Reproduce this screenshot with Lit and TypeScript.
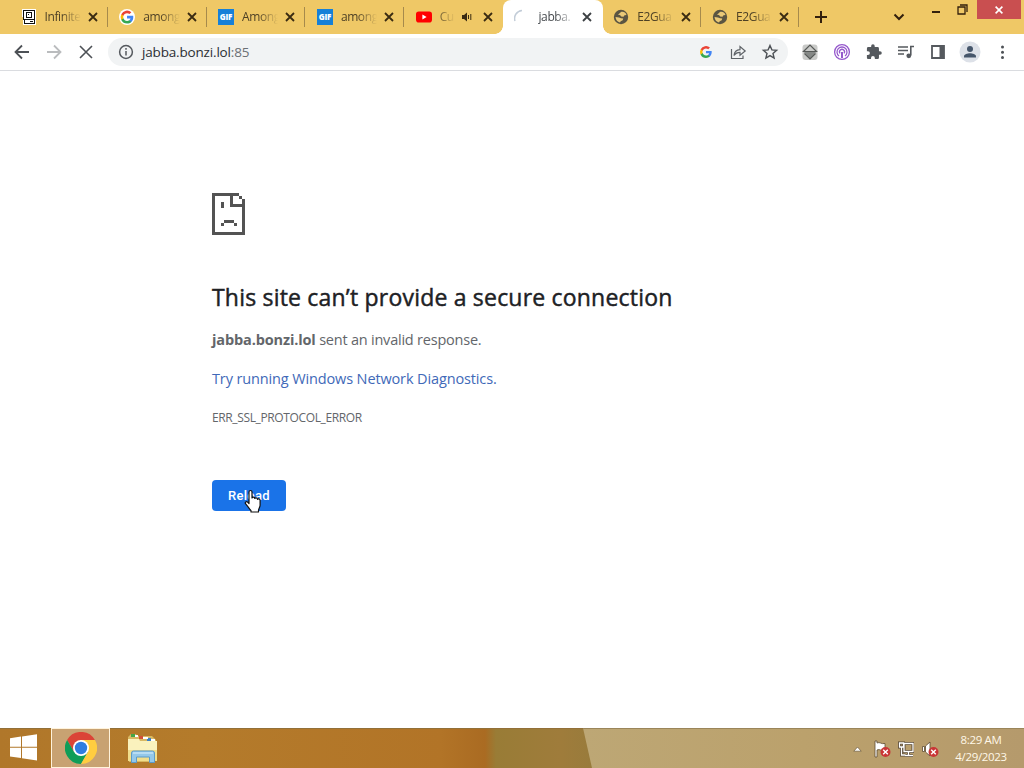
import { LitElement, html, css, svg } from 'lit';
import { customElement, property } from 'lit/decorators.js';

const googleLogo = svg`
  <path fill="#4285f4" d="M22.6 12.2c0-.8-.1-1.500-.2-2.200H12v4.300h5.900a5 5 0 0 1-2.200 3.300v2.800h3.600c2.100-2 3.300-4.800 3.300-8.200z"/>
  <path fill="#34a853" d="M12 23c3 0 5.500-1 7.300-2.700l-3.600-2.700c-1 .7-2.300 1-3.700 1-2.900 0-5.300-1.900-6.200-4.500H2.200v2.800A11 11 0 0 0 12 23z"/>
  <path fill="#fbbc05" d="M5.800 14.100a6.600 6.600 0 0 1 0-4.200V7.100H2.200a11 11 0 0 0 0 9.900z"/>
  <path fill="#ea4335" d="M12 5.400c1.600 0 3.100.6 4.200 1.600l3.200-3.100A11 11 0 0 0 2.200 7.100l3.600 2.800C6.700 7.300 9.100 5.400 12 5.400z"/>
`;

const icons = {
  infinite: html`<svg width="16" height="16" viewBox="0 0 16 16" shape-rendering="crispEdges">
    <path fill="#fff" d="M1 0h14v16H2z"/>
    <path fill="#111" d="M3 1h10v1H3zM2 1h1v10H2zM13 1h1v10h-1zM2 10h12v1H2zM5 3h6v1H5zM5 4h1v4H5zM10 4h1v4h-1zM5 8h6v1H5zM7 5h1v1H7zM3 11h1v3H3zM13 11h1v3h-1zM3 14h11v1H3zM9 12h3v1H9z"/>
  </svg>`,
  google: html`<svg width="16" height="16" viewBox="0 0 24 24"><circle cx="12" cy="12" r="12" fill="#fff"/><g transform="translate(1.500 1.500) scale(.88)">${googleLogo}</g></svg>`,
  gif: html`<svg width="16" height="16" viewBox="0 0 16 16"><path fill="#1680d8" d="M0 0h16v16H0z"/>
    <text x="8" y="11.200" text-anchor="middle" textLength="12.500" font-family="Open Sans, sans-serif" font-weight="800" font-size="8" fill="#fff">GIF</text></svg>`,
  youtube: html`<svg width="16" height="16" viewBox="0 0 16 16"><rect y="2.500" width="16" height="11" rx="2.800" fill="#f00"/><path fill="#fff" d="M6.400 5.600v4.800L10.600 8z"/></svg>`,
  spinner: html`<svg width="16" height="16" viewBox="0 0 16 16"><path d="M1 12A8 8 0 0 1 8 1.500" fill="none" stroke="#c3cdd8" stroke-width="1.500"/></svg>`,
  globe: html`<svg width="16" height="16" viewBox="0 0 16 16"><circle cx="8" cy="8" r="7.200" fill="#5b5542"/>
    <path fill="#e9c877" d="M8 3c2.500-.6 4.800.8 5.500 3l-2 .3-1 1.500-2.300-.3L7 6 5 5.800zM2.500 8l3.500.5 2 .8 2.200.2-.5 1.800-2 .9-.7 1.300C4.500 13 2.800 11 2.500 8z"/></svg>`,
};

const tabs = [
  { icon: 'infinite', title: 'Infinite' },
  { icon: 'google', title: 'among' },
  { icon: 'gif', title: 'Among' },
  { icon: 'gif', title: 'among' },
  { icon: 'youtube', title: 'Cu', audio: true },
  { icon: 'spinner', title: 'jabba.', active: true },
  { icon: 'globe', title: 'E2Gua' },
  { icon: 'globe', title: 'E2Gua' },
];

@customElement('browser-tab')
export class BrowserTab extends LitElement {
  @property({ type: Object }) tab: any = {};

  static styles = css`
    :host {
      display: block;
      width: 98.8px;
      flex: none;
    }

    .tab {
      position: relative;
      box-sizing: border-box;
      height: 34px;
      padding: 0 8px 0 11.5px;
      display: flex;
      align-items: center;
      color: #4d4025;
      font: 12px/34px "Open Sans", sans-serif;
    }

    .separator {
      border-right: 1px solid #a68a4c;
      height: 20px;
      margin: 7px 0;
      padding-right: 7px;
    }

    .active {
      background: #fff;
      border-radius: 8px 8px 0 0;
      margin-right: -1px;
      padding-right: 9px;
      color: #45494d;
    }

    /* curved feet of the selected tab */
    .active::before,
    .active::after {
      content: '';
      position: absolute;
      bottom: 0;
      width: 8px;
      height: 8px;
    }

    .active::before {
      left: -8px;
      background: radial-gradient(circle at 0 0, transparent 7.5px, #fff 8px);
    }

    .active::after {
      right: -8px;
      background: radial-gradient(circle at 100% 0, transparent 7.5px, #fff 8px);
    }

    .favicon {
      display: flex;
      margin-right: 8px;
    }

    .title {
      flex: 1;
      min-width: 0;
      height: 34px;
      white-space: nowrap;
      letter-spacing: -0.4px;
      mask-image: linear-gradient(90deg, #000 calc(100% - 20px), transparent);
    }

    .close {
      display: block;
      margin-left: 5px;
    }

    .audio {
      display: block;
      margin: 0 3px 0 6px;
    }
  `;

  render() {
    const { icon, title, active, audio, separator } = this.tab;
    return html`
      <div class="tab ${active ? 'active' : ''} ${separator ? 'separator' : ''}">
        <span class="favicon">${icons[icon]}</span>
        <span class="title">${title}</span>
        ${audio ? html`
          <svg class="audio" width="12" height="12" viewBox="0 0 12 12">
            <path fill="#3a2b12" d="M1 4h2l3-2.500v9L3 8H1z"/>
            <path d="M7.500 4v4M9.800 3v6" fill="none" stroke="#3a2b12"/>
          </svg>` : ''}
        <svg class="close" width="14" height="14" viewBox="0 0 14 14">
          <path d="M3 3l8 8M11 3l-8 8" stroke="${active ? '#3c4043' : '#3a2b12'}" stroke-width="1.800"/>
        </svg>
      </div>
    `;
  }
}

@customElement('app-root')
export class AppRoot extends LitElement {
  static styles = css`
    :host {
      display: flex;
      flex-direction: column;
      width: 1024px;
      height: 768px;
      overflow: hidden;
      background: #fff;
      font-family: "Open Sans", sans-serif;
    }

    svg {
      display: block;
      flex: none;
    }

    .tabstrip {
      display: flex;
      height: 34px;
      padding-left: 9px;
      background: #efc866;
      flex: none;
    }

    .new-tab {
      margin: 9px 0 0 14px;
    }

    .window-buttons {
      display: flex;
      margin-left: auto;
      align-items: flex-start;
    }

    .chevron {
      margin: 12px 27px 0 0;
    }

    .minimize {
      margin: 11px 17px 0 0;
    }

    .restore {
      margin: 4px 9px 0 0;
    }

    .close-window {
      display: flex;
      width: 44px;
      height: 19px;
      margin-right: 3px;
      align-items: center;
      justify-content: center;
      background: #c94f50;
    }

    .toolbar {
      box-sizing: border-box;
      display: flex;
      height: 37px;
      padding: 0 10px 0 12px;
      align-items: center;
      border-bottom: 1px solid #dadce0;
      flex: none;
    }

    .nav {
      display: flex;
      gap: 12px;
      margin-right: 12px;
    }

    .omnibox {
      box-sizing: border-box;
      display: flex;
      width: 680px;
      height: 28px;
      padding: 0 8px;
      align-items: center;
      border-radius: 14px;
      background: #f1f3f4;
    }

    .url {
      flex: 1;
      margin-left: 6px;
      color: #2b2e32;
      font-size: 13.5px;
      line-height: 28px;
      letter-spacing: -0.17px;
    }

    .port {
      color: #6b7075;
    }

    .actions {
      display: flex;
      gap: 12px;
    }

    .extensions {
      display: flex;
      gap: 12px;
      margin-left: 12px;
    }

    .page {
      flex: 1;
      padding: 122px 0 0 212px;
      color: #63666a;
      font-size: 14.5px;
      line-height: 24px;
      letter-spacing: -0.22px;
    }

    h1 {
      margin: 46px 0 0;
      color: #202124;
      font-size: 23px;
      font-weight: 500;
      line-height: 32px;
      white-space: nowrap;
      letter-spacing: 0.2px;
      -webkit-text-stroke: 0.45px #202124;
    }

    p {
      margin: 15px 0 0;
      white-space: nowrap;
    }

    b {
      letter-spacing: -0.13px;
    }

    .link {
      color: #4169b8;
      letter-spacing: -0.13px;
    }

    .code {
      font-size: 12px;
      letter-spacing: -0.37px;
    }

    .reload {
      position: relative;
      width: 74px;
      height: 31px;
      margin-top: 50px;
      border-radius: 4px;
      background: #1a73e8;
      color: #fff;
      font: 500 13px/31px Roboto, sans-serif;
      letter-spacing: 0.3px;
      text-align: center;
    }

    .cursor {
      position: absolute;
      left: 32px;
      top: 9px;
    }

    .taskbar {
      display: flex;
      height: 40px;
      flex: none;
      box-shadow: inset 0 1px #927039;
      background: linear-gradient(90deg, #b0772a, #b47b2b 200px, #b27427 440px, #aa6b22 485px, #997c36 496px, #9f7c3b 560px, #977b3c 600px);
    }

    .start {
      margin: 6px 14px 0 10px;
    }

    .task {
      box-sizing: border-box;
      display: flex;
      width: 59px;
      height: 40px;
      align-items: center;
      justify-content: center;
      border: 1px solid #fff3dc;
      background: #c8a272;
    }

    .explorer {
      margin: 5px 0 0 16px;
    }

    .tray {
      box-sizing: border-box;
      display: flex;
      width: 441px;
      margin-left: auto;
      padding-right: 16px;
      align-items: center;
      justify-content: flex-end;
      clip-path: polygon(0 0, 100% 0, 100% 100%, 9px 100%);
      background: linear-gradient(90deg, #bda775, #bba16c 50%, #b59a6c);
      box-shadow: inset 0 1px #9a855a;
    }

    .tray-icons {
      display: flex;
      align-items: center;
      gap: 8px;
      margin: 2px 16px 0 0;
    }

    .overflow {
      margin-right: 4px;
    }

    .clock {
      width: 54px;
      color: #fff8e8;
      font-size: 11.5px;
      line-height: 17px;
      letter-spacing: -0.35px;
      text-align: center;
      white-space: nowrap;
    }
  `;

  _renderTabs() {
    return tabs.map((tab, i) => {
      const separator = !tab.active && !tabs[i + 1]?.active;
      return html`<browser-tab .tab="${{ ...tab, separator }}"></browser-tab>`;
    });
  }

  _renderToolbar() {
    return html`
      <nav class="toolbar">
        <div class="nav">
          <svg width="20" height="20" viewBox="0 0 20 20" fill="none" stroke="#4d5156" stroke-width="1.800"><path d="M17 10H4M10 3.500L3.500 10l6.500 6.500"/></svg>
          <svg width="20" height="20" viewBox="0 0 20 20" fill="none" stroke="#babcbe" stroke-width="1.800"><path d="M3 10h13M10 3.500l6.500 6.500-6.500 6.500"/></svg>
          <svg width="20" height="20" viewBox="0 0 20 20" fill="none" stroke="#4d5156" stroke-width="1.600"><path d="M4 4l12 12M16 4L4 16"/></svg>
        </div>
        <div class="omnibox">
          <svg width="20" height="20" viewBox="0 0 20 20" fill="none" stroke="#55595e" stroke-width="1.500"><circle cx="10" cy="10" r="6.400"/><path d="M10 9v4.500M10 6v1.700"/></svg>
          <span class="url">jabba.bonzi.lol<span class="port">:85</span></span>
          <div class="actions">
            <svg width="20" height="20" viewBox="0 0 20 20"><g transform="translate(3.500 3.500) scale(.54)">${googleLogo}</g></svg>
            <svg width="20" height="20" viewBox="0 0 20 20" fill="none" stroke="#5f6368" stroke-width="1.200"><path d="M3.500 7v9.500h11.500V13.500"/><path d="M6 13.500c.4-3.700 2.500-5.600 6-5.800V4.500L17.200 9 12 13.200V10.300c-2.500 0-4.500.9-6 3.200z"/></svg>
            <svg width="20" height="20" viewBox="0 0 20 20" fill="none" stroke="#4d5156" stroke-width="1.400"><path d="M10 3.500l1.900 4.400 4.700.4-3.600 3.100 1.100 4.700-4.100-2.500-4.100 2.500L7 11.400 3.400 8.300l4.700-.4z"/></svg>
          </div>
        </div>
        <div class="extensions">
          <svg width="20" height="20" viewBox="0 0 20 20"><rect x="2.500" y="2.500" width="15" height="15.500" rx="3" fill="#c9cac8"/><path fill="#858886" d="M3.500 9.500h13L10 17z"/><path d="M3.500 9.500L10 3l6.500 6.500zM4.500 11.500L10 17l5.500-5.500" fill="none" stroke="#565957" stroke-width="1.200"/></svg>
          <svg width="20" height="20" viewBox="0 0 20 20" fill="none" stroke="#9558cc" stroke-width="1.300"><circle cx="10" cy="10" r="7.400"/><path d="M7 14a5 5 0 1 1 6 0M8 11.400a2.500 2.500 0 1 1 4 0"/><path d="M10 10v6" stroke-width="2"/></svg>
          <svg width="20" height="20" viewBox="0 0 24 24"><path fill="#55595e" d="M20.500 11H19V7a2 2 0 0 0-2-2h-4V3.500a2.500 2.500 0 0 0-5 0V5H4a2 2 0 0 0-2 2v3.800h1.500a2.700 2.700 0 0 1 0 5.400H2V20c0 1.100.9 2 2 2h3.800v-1.500a2.700 2.700 0 0 1 5.400 0V22H17a2 2 0 0 0 2-2v-4h1.500a2.500 2.500 0 0 0 0-5z" transform="translate(1.800 1.800) scale(.85)"/></svg>
          <svg width="20" height="20" viewBox="0 0 20 20"><path d="M2 5h10M2 8.500h10M2 12h6M14.800 13.500V4.500h3.200" fill="none" stroke="#55595e" stroke-width="1.600"/><circle cx="12.800" cy="13.800" r="2.400" fill="#55595e"/></svg>
          <svg width="20" height="20" viewBox="0 0 20 20"><path d="M4 4h12v12H4z" fill="none" stroke="#55595e" stroke-width="1.800"/><path fill="#55595e" d="M11.500 4H16v12h-4.500z"/></svg>
          <svg width="20" height="20" viewBox="0 0 20 20" overflow="visible"><circle cx="10" cy="10" r="10.500" fill="#dde1e8"/><circle cx="10" cy="7" r="3" fill="#46566b"/><path fill="#46566b" d="M4 15.500v-1.300c0-2 3.500-3 6-3s6 1 6 3v1.300z"/></svg>
          <svg width="20" height="20" viewBox="0 0 20 20" fill="#4d5156" overflow="visible"><circle cx="10.500" cy="5" r="1.500"/><circle cx="10.500" cy="10.200" r="1.500"/><circle cx="10.500" cy="15.400" r="1.500"/></svg>
        </div>
      </nav>
    `;
  }

  _renderPage() {
    return html`
      <main class="page">
        <svg width="33" height="42" viewBox="0 0 99 126" fill="#535353" shape-rendering="crispEdges">
          <path d="M0 0h81v9h9v9h9v108H0zM9 9v108h81V42H54V9zM63 9v24h27V18h-9V9z" fill-rule="evenodd"/>
          <path d="M27 27h9v18h-9zM36 81h30v9H36zM27 90h9v9h-9zM66 90h9v9h-9z"/>
        </svg>
        <h1>This site can’t provide a secure connection</h1>
        <p><b>jabba.bonzi.lol</b> sent an invalid response.</p>
        <p class="link">Try running Windows Network Diagnostics.</p>
        <p class="code">ERR_SSL_PROTOCOL_ERROR</p>
        <div class="reload">
          Reload
          <svg class="cursor" width="18" height="24" viewBox="0 0 18 24">
            <path fill="#fff" stroke="#111" stroke-width="1.200" stroke-linejoin="round" d="M5 14.500V3c0-2 3-2 3 0v6c.3-1.300 2.800-1.100 2.800.5.5-1 2.600-.8 2.700.8.6-.9 2.600-.6 2.600 1.100v4.800c0 2-1.600 3.600-1.600 5.500V23H7v-1.300c-1.400-1.800-3.200-4.200-5.500-7-.9-1.600 1-2.700 2.100-1.600z"/>
          </svg>
        </div>
      </main>
    `;
  }

  _renderTaskbar() {
    const badge = svg`<circle cx="11.500" cy="11" r="5" fill="#c93636"/><path d="M9.200 8.700l4.600 4.600M13.800 8.700l-4.600 4.600" stroke="#fff" stroke-width="1.400"/>`;
    return html`
      <footer class="taskbar">
        <svg class="start" width="27" height="27" viewBox="0 0 27 27"><path fill="#fff" d="M0 4.200l11-1.600v10.200H0zM12 2.400L27 .2v12.600H12zM0 13.800h11V24L0 22.600zM12 13.800h15v12.800l-15-2.400z"/></svg>
        <div class="task">
          <svg width="32" height="32" viewBox="0 0 32 32">
            <path fill="#db4437" d="M2.100 8A16 16 0 0 1 29.900 8H16L9.100 20z"/>
            <path fill="#0f9d58" d="M2.100 8A16 16 0 0 0 16 32l6.900-12H9.100z"/>
            <path fill="#ffcd40" d="M29.900 8A16 16 0 0 1 16 32l6.900-12L16 8z"/>
            <circle cx="16" cy="16" r="8" fill="#fff"/><circle cx="16" cy="16" r="6.200" fill="#2f7de1"/>
          </svg>
        </div>
        <svg class="explorer" width="34" height="31" viewBox="0 0 34 31">
          <path fill="#d8b963" d="M2 4l3-3h5l1 2h15l4 4v20l-2 2H3z"/>
          <path fill="#faf2bd" d="M2 6h11l1 2h17v20H2z"/>
          <path fill="#f1de8c" d="M2 17h29v11H2z"/>
          <path fill="#45a546" d="M5 1h4v3H5z"/><path fill="#d25036" d="M13 3h4v3h-4z"/><path fill="#3b80c3" d="M21 5h4v3h-4z"/>
          <path fill="#fff" d="M9 2h3v2H9zM17 4h5v2h-5zM25 6h4v2h-4z"/>
          <path fill="#94c8ea" stroke="#5c9bc8" d="M5.500 29.500V20q0-2 2-2h19q2 0 2 2v9.500h-5V24h-13v5.500z"/>
          <path stroke="#daf0fc" d="M7 20h20"/>
        </svg>
        <div class="tray">
          <div class="tray-icons">
            <svg class="overflow" width="9" height="6" viewBox="0 0 9 6"><path fill="#fff" stroke="#6c593b" stroke-width=".7" d="M.8 5.200L4.500 1l3.700 4.200z"/></svg>
            <svg width="16" height="16" viewBox="0 0 16 16" overflow="visible"><path fill="#fff" stroke="#5d4b32" stroke-width=".8" d="M1 0h2v2c3-1.500 4 1.500 8 .5v7C7 10.500 6 7.500 3 9v7H1z"/>${badge}</svg>
            <svg width="16" height="16" viewBox="0 0 16 16"><g fill="none" stroke="#564631" stroke-width="3"><path d="M6 2.500h9v8H6zM10.500 11v3M7 14.500h8M1.500 2h4v4h-4zM3.500 6v8h4"/></g><g fill="none" stroke="#fff" stroke-width="1.300"><path d="M6 2.500h9v8H6zM10.500 11v3M7 14.500h8M1.500 2h4v4h-4zM3.500 6v8h4"/></g></svg>
            <svg width="16" height="16" viewBox="0 0 16 16" overflow="visible"><path fill="#fff" stroke="#5d4b32" stroke-width=".8" d="M.5 5.500h2v5h-2zM3.500 5L8 1v14l-4.500-4z"/>${badge}</svg>
          </div>
          <div class="clock">8:29 AM<br>4/29/2023</div>
        </div>
      </footer>
    `;
  }

  render() {
    return html`
      <header class="tabstrip">
        ${this._renderTabs()}
        <svg class="new-tab" width="16" height="16" viewBox="0 0 16 16"><path d="M8 2v12M2 8h12" stroke="#33200d" stroke-width="2"/></svg>
        <div class="window-buttons">
          <svg class="chevron" width="12" height="10" viewBox="0 0 12 10"><path d="M1.500 2.500L6 7l4.500-4.500" fill="none" stroke="#33200d" stroke-width="2"/></svg>
          <svg class="minimize" width="8" height="3" viewBox="0 0 8 3"><path fill="#33200d" d="M0 0h8v2H0z"/></svg>
          <svg class="restore" width="11" height="11" viewBox="0 0 11 11"><path d="M1 3h7v7H1zM3 1h7v7" fill="none" stroke="#33200d" stroke-width="1.300"/></svg>
          <div class="close-window"><svg width="8" height="8" viewBox="0 0 8 8"><path d="M.6.6l6.800 6.800M7.400.6L.6 7.400" stroke="#fff" stroke-width="1.600"/></svg></div>
        </div>
      </header>
      ${this._renderToolbar()}
      ${this._renderPage()}
      ${this._renderTaskbar()}
    `;
  }
}
